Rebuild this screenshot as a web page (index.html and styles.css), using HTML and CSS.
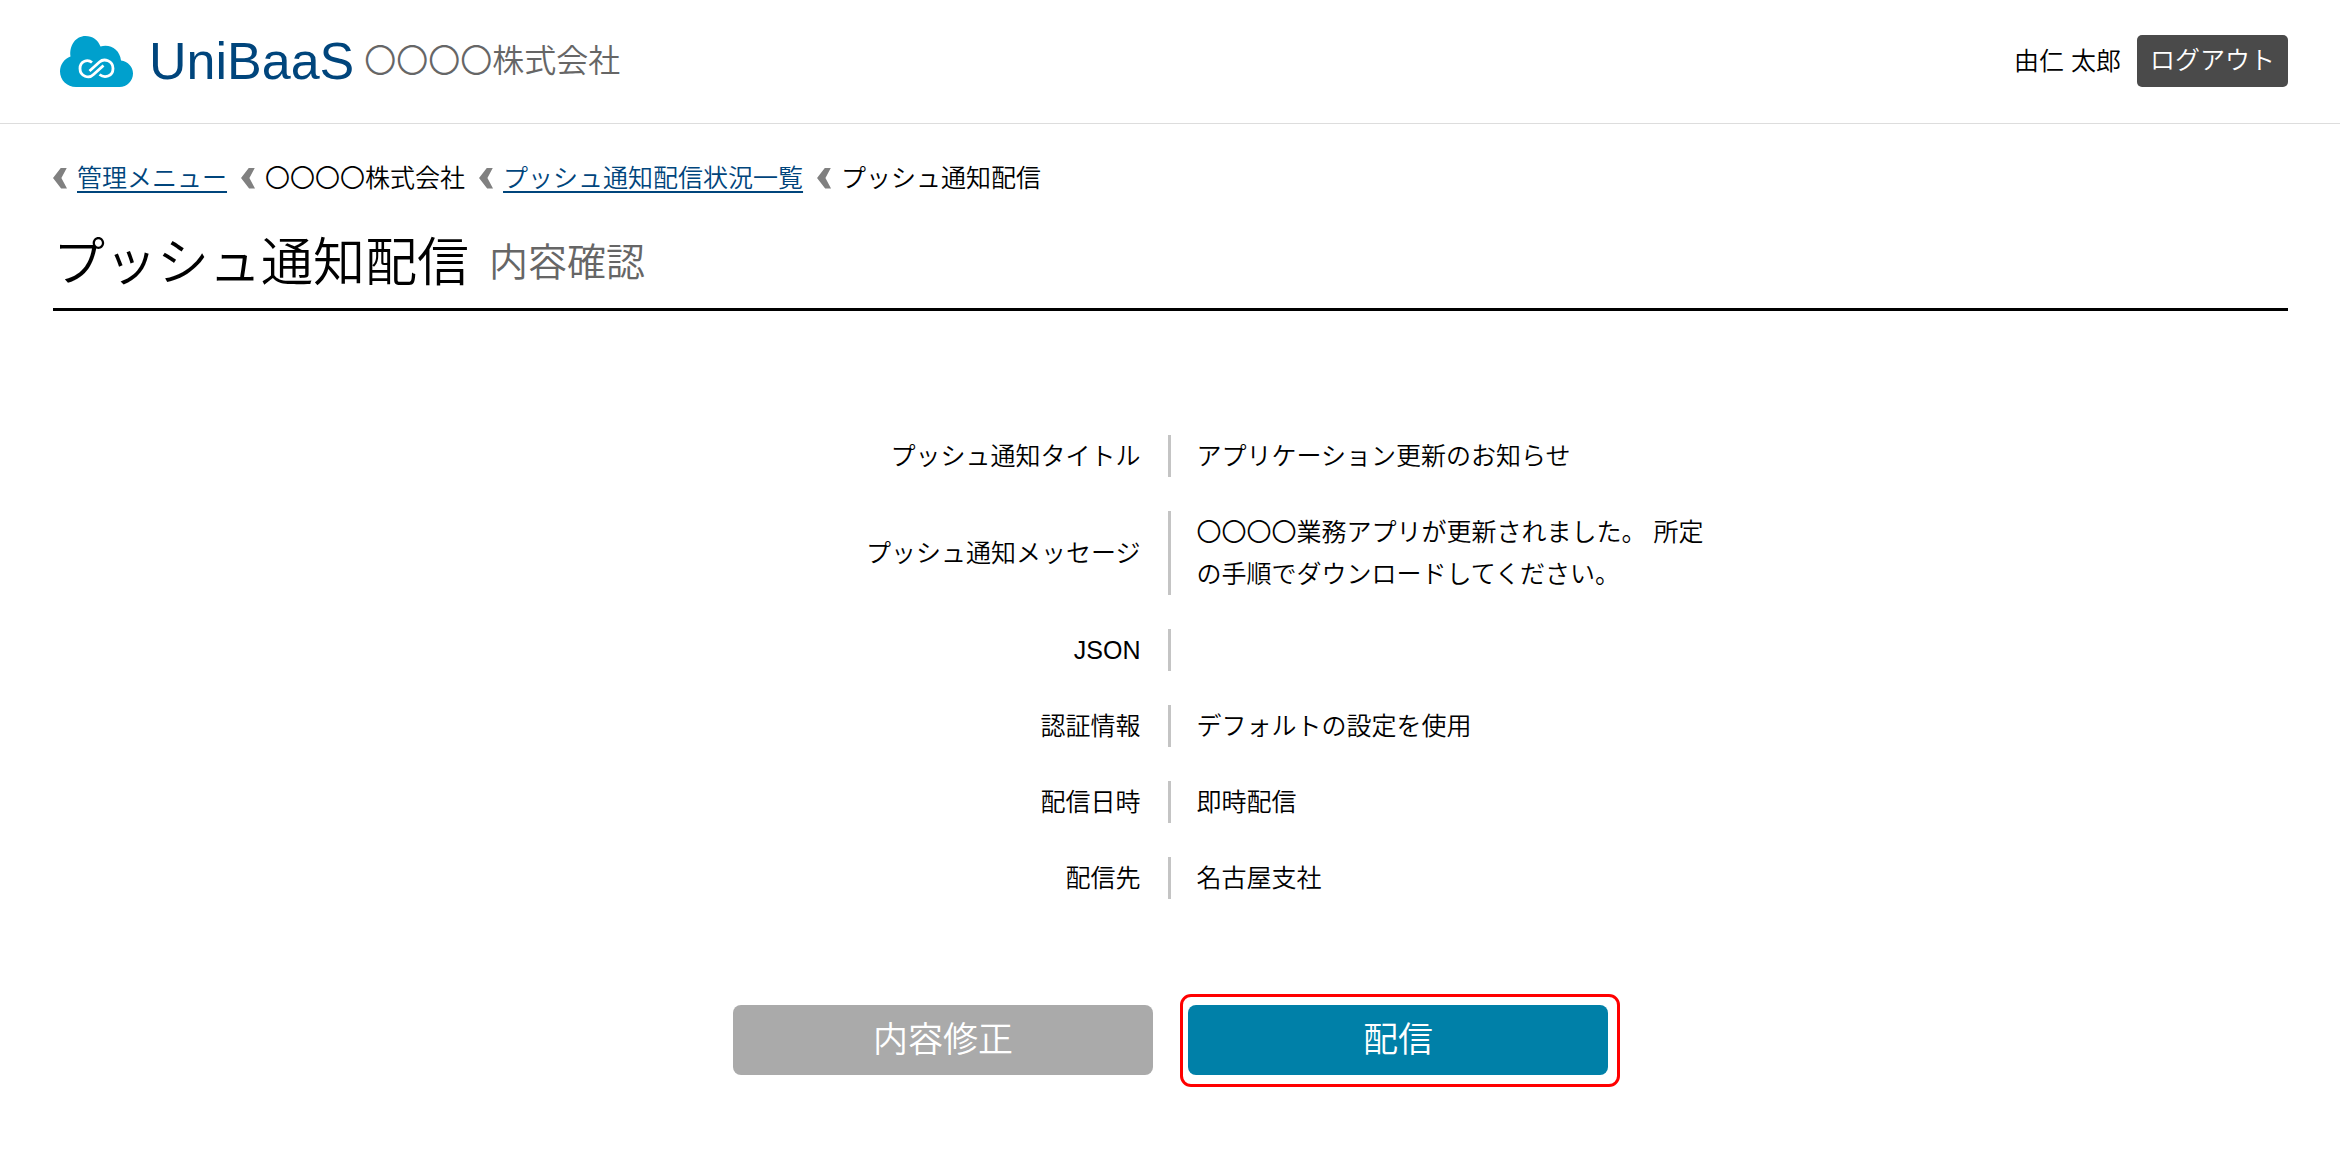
FILE: index.html
```html
<!DOCTYPE html>
<html lang="ja">

<head>
    <meta charset="UTF-8">
    <meta name="viewport" content="width=device-width, initial-scale=1.0">
    <title>プッシュ通知配信 内容確認 | UniBaaS</title>
    <link rel="stylesheet" href="styles.css">
</head>

<body>
    <header class="header">
        <div class="brand">
            <svg class="logo" viewBox="0 0 73 51" aria-hidden="true">
                <path fill="#00a0cd" d="M16 51C7 51 0 44 0 35.500C0 28.500 4.500 22.500 10.500 20.500C9 9 16 0 25.500 0C32.500 0 38 4 40.500 10.500C50 7.500 60 13.500 61 24.500C68 25.500 73 31 73 37.500C73 45 67 51 59.500 51Z"/>
                <g fill="none" stroke="#fff" stroke-width="2.800">
                    <path d="M32 26.500C28 23 20 24.500 20 32.500C20 40.500 29 43 33.500 38.500L43.500 29.500"/>
                    <path d="M29.500 35L39.500 26C44 22 53 24.500 53 32.500C53 40.500 44.500 42.500 39.500 38.500"/>
                </g>
            </svg>
            <span class="brand-name">UniBaaS</span>
            <span class="company">〇〇〇〇株式会社</span>
        </div>
        <div class="user">
            <span>由仁 太郎</span>
            <button type="button" class="logout">ログアウト</button>
        </div>
    </header>

    <main class="main">
        <nav aria-label="パンくずリスト">
            <ol class="breadcrumb">
                <li><a href="#">管理メニュー</a></li>
                <li>〇〇〇〇株式会社</li>
                <li><a href="#">プッシュ通知配信状況一覧</a></li>
                <li>プッシュ通知配信</li>
            </ol>
        </nav>

        <h1 class="title">プッシュ通知配信 <small>内容確認</small></h1>

        <dl class="confirm">
            <dt>プッシュ通知タイトル</dt>
            <dd>アプリケーション更新のお知らせ</dd>
            <dt>プッシュ通知メッセージ</dt>
            <dd>〇〇〇〇業務アプリが更新されました。 所定の手順でダウンロードしてください。</dd>
            <dt>JSON</dt>
            <dd></dd>
            <dt>認証情報</dt>
            <dd>デフォルトの設定を使用</dd>
            <dt>配信日時</dt>
            <dd>即時配信</dd>
            <dt>配信先</dt>
            <dd>名古屋支社</dd>
        </dl>

        <form class="actions">
            <button type="button" class="btn btn-back">内容修正</button>
            <button type="submit" class="btn btn-send">配信</button>
        </form>
    </main>
</body>

</html>
```

FILE: styles.css
```css
* {
    box-sizing: border-box;
}

body {
    margin: 0;
    background-color: #fff;
    color: #000;
    font-family: "Liberation Sans", Arial, "Noto Sans CJK JP", sans-serif;
    font-size: 25px;
    font-weight: 350;
    line-height: 42px;
}

button {
    border: none;
    color: #fff;
    font: inherit;
    cursor: pointer;
}

/* ヘッダー */
.header {
    display: flex;
    justify-content: space-between;
    align-items: center;
    height: 124px;
    padding: 0 52px 1px 60px;
    border-bottom: 1px solid #ddd;
}

.brand,
.user {
    display: flex;
    align-items: center;
}

.logo {
    width: 73px;
    height: 51px;
    margin-right: 16px;
}

.brand-name {
    margin-right: 10px;
    color: #00457c;
    font-size: 52px;
}

.company {
    color: #666;
    font-size: 32px;
}

.user {
    gap: 16px;
}

.logout {
    height: 52px;
    padding: 0 13px 3px;
    border-radius: 5px;
    background-color: #4a4a4a;
}

/* 本文 */
.main {
    padding: 33px 52px 84px 53px;
}

.breadcrumb {
    display: flex;
    flex-wrap: wrap;
    gap: 14px;
    margin: 0;
    padding: 0;
    list-style: none;
}

.breadcrumb li {
    display: flex;
    align-items: center;
    gap: 10px;
}

.breadcrumb li::before {
    content: "";
    width: 14px;
    height: 21px;
    background-color: #808080;
    clip-path: polygon(0 50%, 58% 0, 100% 0, 60% 50%, 100% 100%, 58% 100%);
}

.breadcrumb a {
    color: #00457c;
    text-decoration-thickness: 2px;
    text-underline-offset: 4px;
}

.title {
    display: flex;
    align-items: center;
    gap: 20px;
    margin: 26px 0 124px;
    padding-bottom: 7px;
    border-bottom: 3px solid #000;
    font-size: 52px;
    font-weight: 350;
    line-height: 76px;
}

.title small {
    color: #666;
    font-size: 39px;
}

/* 確認内容 */
.confirm {
    display: grid;
    grid-template-columns: 1fr 1fr;
    row-gap: 34px;
    margin: 0;
}

.confirm dt {
    display: flex;
    justify-content: flex-end;
    align-items: center;
    min-height: 42px;
    padding-right: 27px;
    border-right: 3px solid #c4c4c4;
}

.confirm dd {
    max-width: 546px;
    margin: 0;
    padding-left: 26px;
}

.actions {
    display: flex;
    justify-content: center;
    gap: 35px;
    margin-top: 106px;
}

.btn {
    width: 420px;
    height: 70px;
    border-radius: 8px;
    font-size: 35px;
}

.btn-back {
    background-color: #aaa;
}

.btn-send {
    position: relative;
    background-color: #0080a8;
}

/* 配信ボタンの強調枠 */
.btn-send::after {
    content: "";
    position: absolute;
    inset: -11px -12px -12px -8px;
    border: 3px solid #f00;
    border-radius: 11px;
}
```
